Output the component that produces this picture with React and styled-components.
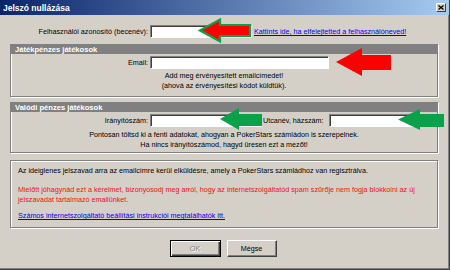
import React from "react";
import styled, { createGlobalStyle } from "styled-components";

const GlobalStyle = createGlobalStyle`
  html, body {
    margin: 0;
    padding: 0;
    background: #d4d0c8;
  }
  body {
    font-family: "Liberation Sans", Arial, sans-serif;
    font-size: 7.2px;
    color: #000;
  }
`;

const Window = styled.div`
  width: 450px;
  height: 270px;
  box-sizing: border-box;
  background: #d4d0c8;
  border-right: 1px solid #404040;
  border-bottom: 1px solid #404040;
  box-shadow: inset -1px -1px #808080;
  display: flex;
  flex-direction: column;
  overflow: hidden;
`;

const TitleBar = styled.div`
  height: 15px;
  flex: none;
  display: flex;
  align-items: center;
  justify-content: space-between;
  padding: 0 3px;
  background: linear-gradient(to right, #0a246a, #a6caf0);
  color: #fff;
  font-weight: bold;
  font-size: 8.5px;
`;

const CloseButton = styled.div`
  width: 10px;
  height: 9px;
  box-sizing: border-box;
  background: #d4d0c8;
  border: 1px solid;
  border-color: #fff #404040 #404040 #fff;
  display: flex;
  align-items: center;
  justify-content: center;
`;

const Body = styled.div`
  flex: 1;
  display: flex;
  flex-direction: column;
  padding: 10px 11px 0 10px;
`;

const Row = styled.div`
  display: flex;
  align-items: center;
  height: 13px;
  margin-top: ${(p) => p.$top || 0}px;
`;

const Label = styled.div`
  flex: none;
  width: ${(p) => p.$width}px;
  text-align: ${(p) => (p.$left ? "left" : "right")};
  margin-right: 2px;
  margin-left: ${(p) => p.$gap || 0}px;
  white-space: nowrap;
`;

const Field = styled.div`
  position: relative;
  flex: none;
  width: ${(p) => p.$width}px;
  height: 13px;
`;

const Input = styled.div`
  width: 100%;
  height: 100%;
  box-sizing: border-box;
  background: #fff;
  border: 1px solid;
  border-color: #808080 #fff #fff #808080;
  box-shadow: inset 1px 1px #404040;
`;

const Arrow = styled.svg`
  position: absolute;
  left: ${(p) => p.$x}px;
  top: ${(p) => p.$y}px;
  overflow: visible;
`;

const Link = styled.a`
  color: #0000ee;
  text-decoration: underline;
  white-space: nowrap;
  margin-left: ${(p) => p.$gap || 0}px;
  cursor: pointer;
`;

const GroupBox = styled.div`
  margin-top: ${(p) => p.$top}px;
  border: 1px solid #808080;
  box-shadow: inset 1px 1px #fff, 1px 1px #fff;
  padding-bottom: ${(p) => p.$bottom}px;
`;

const GroupHeader = styled.div`
  height: 9px;
  line-height: 9px;
  background: #808080;
  color: #fff;
  font-weight: bold;
  font-size: 7.6px;
  padding-left: 4px;
`;

const Hint = styled.div`
  margin-top: ${(p) => p.$top}px;
  text-align: center;
  line-height: 10px;
  white-space: nowrap;
`;

const InfoBox = styled.div`
  margin-top: 7px;
  border: 1px solid #808080;
  box-shadow: inset 1px 1px #fff, 1px 1px #fff;
  padding: 5px 7px 6px;
  line-height: 10px;
  white-space: nowrap;
`;

const Para = styled.div`
  margin-top: ${(p) => p.$top || 0}px;
  color: ${(p) => (p.$warn ? "#f01010" : "#000")};
`;

const ButtonRow = styled.div`
  margin-top: 12px;
  display: flex;
  justify-content: center;
  gap: 6px;
  padding-right: 2px;
`;

const Button = styled.div`
  width: ${(p) => p.$width}px;
  height: 17px;
  box-sizing: border-box;
  display: flex;
  align-items: center;
  justify-content: center;
  border: 1px solid;
  border-color: ${(p) =>
    p.$default ? "#000" : "#fff #404040 #404040 #fff"};
  box-shadow: ${(p) =>
    p.$default
      ? "inset 1px 1px #fff, inset -1px -1px #404040, inset -2px -2px #808080"
      : "inset -1px -1px #808080"};
  color: ${(p) => (p.$disabled ? "#808080" : "#000")};
  text-shadow: ${(p) => (p.$disabled ? "1px 1px #fff" : "none")};
`;

const RED = "#ff0000";
const GREEN = "#0ba14b";

const App = () => {
  return (
    <>
      <GlobalStyle />
      <Window>
        <TitleBar>
          <span>Jelszó nullázása</span>
          <CloseButton>
            <svg width="6" height="5" viewBox="0 0 6 5">
              <path d="M0.5 0.5 L5.5 4.5 M5.5 0.5 L0.5 4.5" stroke="#000" strokeWidth="1.3" />
            </svg>
          </CloseButton>
        </TitleBar>
        <Body>
          <Row $top={0}>
            <Label $width={138}>Felhasználói azonosító (becenév):</Label>
            <Field $width={102}>
              <Input />
              <Arrow $x={48} $y={-7} width="54" height="25" viewBox="0 0 54 25">
                <polygon
                  points="2,12.5 22,1.5 22,7 52,7 52,18 22,18 22,23.5"
                  fill={RED}
                  stroke={GREEN}
                  strokeWidth="2.2"
                  strokeLinejoin="miter"
                />
              </Arrow>
            </Field>
            <Link $gap={2}>Kattints ide, ha elfelejtetted a felhasználóneved!</Link>
          </Row>

          <GroupBox $top={6} $bottom={5}>
            <GroupHeader>Játékpénzes játékosok</GroupHeader>
            <Row $top={2}>
              <Label $width={137}>Email:</Label>
              <Field $width={179}>
                <Input />
                <Arrow $x={186} $y={-8} width="56" height="28" viewBox="0 0 56 28">
                  <polygon points="0,14 26,0 26,7 55,7 55,22 26,22 26,28" fill={RED} />
                </Arrow>
              </Field>
            </Row>
            <Hint $top={2}>
              Add meg érvényesített emailcímedet!
              <br />
              (ahová az érvényesítési kódot küldtük).
            </Hint>
          </GroupBox>

          <GroupBox $top={5} $bottom={2}>
            <GroupHeader>Valódi pénzes játékosok</GroupHeader>
            <Row $top={2}>
              <Label $width={137}>Irányítószám:</Label>
              <Field $width={112}>
                <Input />
                <Arrow $x={70} $y={-6} width="43" height="22" viewBox="0 0 43 22">
                  <polygon points="0,11 19,0 19,6 42,6 42,18 19,18 19,22" fill={GREEN} />
                </Arrow>
              </Field>
              <Label $width={64} $gap={1} $left>
                Utcanév, házszám:
              </Label>
              <Field $width={100}>
                <Input />
                <Arrow $x={69} $y={-5} width="46" height="21" viewBox="0 0 46 21">
                  <polygon points="0,10.5 22,0 22,5 46,5 46,18 22,18 22,21" fill={GREEN} />
                </Arrow>
              </Field>
            </Row>
            <Hint $top={3}>
              Pontosan töltsd ki a fenti adatokat, ahogyan a PokerStars számládon is szerepelnek.
              <br />
              Ha nincs irányítószámod, hagyd üresen ezt a mezőt!
            </Hint>
          </GroupBox>

          <InfoBox>
            <Para>
              Az ideiglenes jelszavad arra az emailcímre kerül elküldésre, amely a PokerStars
              számládhoz van regisztrálva.
            </Para>
            <Para $top={9} $warn>
              Mielőtt jóhagynád ezt a kérelmet, bizonyosodj meg arról, hogy az internetszolgáltatód
              spam szűrője nem fogja blokkolni az új
              <br />
              jelszavadat tartalmazó emailünket.
            </Para>
            <Para $top={6}>
              <Link>Számos internetszolgáltató beállítási instrukciói megtalálhatók itt.</Link>
            </Para>
          </InfoBox>

          <ButtonRow>
            <Button $width={51} $default $disabled>
              OK
            </Button>
            <Button $width={50}>Mégse</Button>
          </ButtonRow>
        </Body>
      </Window>
    </>
  );
};

export default App;
